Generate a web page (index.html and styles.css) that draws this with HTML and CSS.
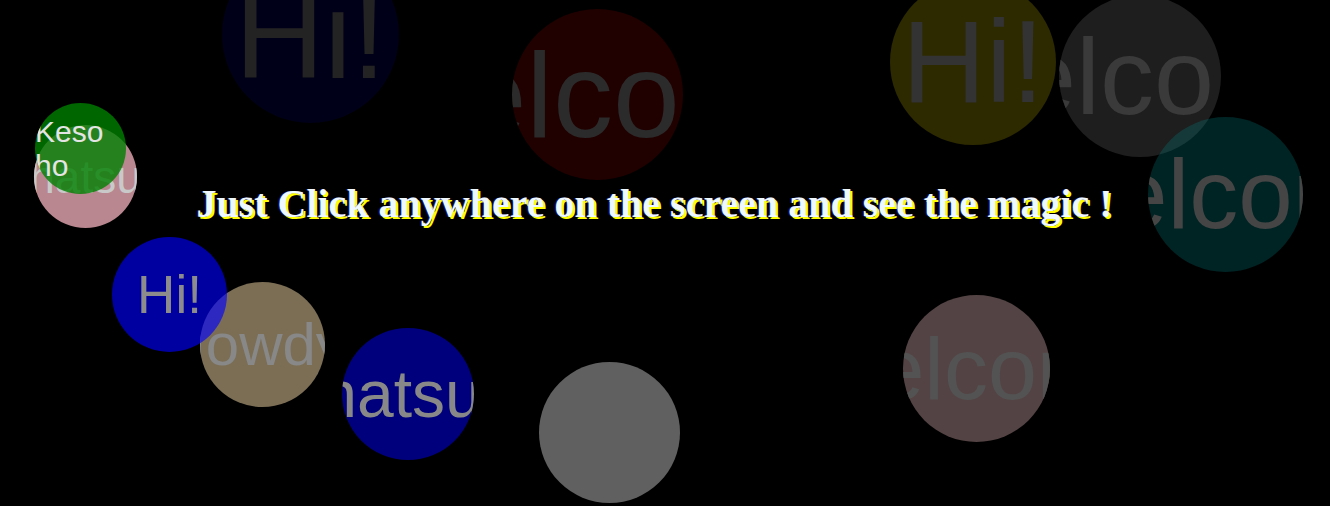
FILE: index.html
```html
<!DOCTYPE html>
<html lang="en">
<head>
<meta charset="utf-8">
<title>Bubbles</title>
<link rel="stylesheet" href="styles.css">
</head>
<body>
<main class="stage">
  <div class="bubble b-a">Hi!</div>
  <div class="bubble b-b">Welcome</div>
  <div class="bubble b-c">Hi!</div>
  <div class="bubble b-d">Welcome</div>
  <div class="bubble b-e">Welcome</div>
  <div class="bubble b-g">hatsu</div>
  <div class="bubble b-f">Keso ho</div>
  <div class="bubble b-i">Howdy!</div>
  <div class="bubble b-h">Hi!</div>
  <div class="bubble b-j">hatsu</div>
  <div class="bubble b-k"></div>
  <div class="bubble b-l">Welcome</div>
  <h1 class="title">Just Click anywhere on the screen and see the magic !</h1>
</main>
</body>
</html>
```

FILE: styles.css
```css
html, body {
  margin: 0;
  padding: 0;
  background: #000;
  height: 100%;
  overflow: hidden;
}

.stage {
  position: relative;
  height: 100%;
  padding-top: 180px;
  box-sizing: border-box;
}

.title {
  position: relative;
  z-index: 2;
  margin: 0;
  padding-right: 21px;
  text-align: center;
  font-family: "Liberation Serif", "Times New Roman", serif;
  font-weight: bold;
  font-size: 40px;
  color: #f0f8ff;
  text-shadow: -1px 0 0 rgba(60, 60, 255, 0.45), 2px 2px 0 #ffff00;
}

.bubble {
  position: absolute;
  display: flex;
  align-items: center;
  justify-content: center;
  border-radius: 50%;
  overflow: hidden;
  font-family: "Liberation Sans", Arial, sans-serif;
  color: #888;
}

.b-a { left: 222px; top: -54px; width: 177px; height: 177px; background: #000018; color: #232323; font-size: 124px; }
.b-b { left: 512px; top: 9px; width: 171px; height: 171px; background: #210000; color: #2b2b2b; font-size: 120px; }
.b-c { left: 890px; top: -21px; width: 166px; height: 166px; background: #2d2a00; color: #333; font-size: 116px; }
.b-d { left: 1059px; top: -5px; width: 162px; height: 162px; background: rgba(128, 128, 128, 0.23); color: #3a3a3a; font-size: 108px; }
.b-e { left: 1148px; top: 117px; width: 155px; height: 155px; background: rgba(0, 128, 128, 0.28); color: #454545; font-size: 98px; }
.b-g { left: 34px; top: 125px; width: 103px; height: 103px; background: #b8878f; color: #c9c9c9; font-size: 46px; }
.b-f { left: 35px; top: 103px; width: 91px; height: 91px; background: rgba(0, 128, 0, 0.8); color: #e4e4e4; font-size: 30px; }
.b-i { left: 200px; top: 282px; width: 125px; height: 125px; background: #7b6e55; color: #888; font-size: 60px; }
.b-h { left: 112px; top: 237px; width: 115px; height: 115px; background: rgba(0, 0, 255, 0.63); color: #8c8c8c; font-size: 53px; }
.b-j { left: 342px; top: 328px; width: 132px; height: 132px; padding-right: 14px; box-sizing: border-box; background: #00007c; color: #888; font-size: 66px; }
.b-k { left: 539px; top: 362px; width: 141px; height: 141px; background: #606060; }
.b-l { left: 903px; top: 295px; width: 147px; height: 147px; background: #544344; color: #535353; font-size: 88px; }
```
